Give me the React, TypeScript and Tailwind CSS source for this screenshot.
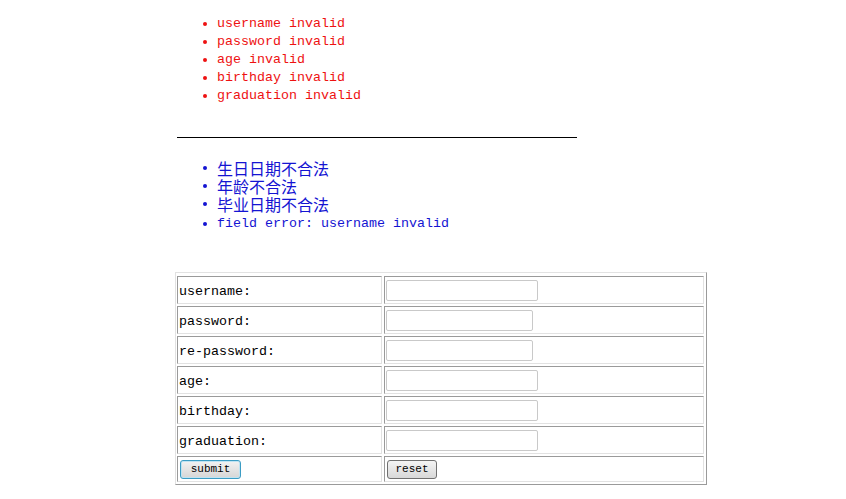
const mono = "font-['Liberation_Mono','Courier_New',monospace]";
const cjk = "inline-block align-top text-[16px] leading-[18px] font-['Noto_Sans_CJK_SC',sans-serif]";

const errors = ["username invalid", "password invalid", "age invalid", "birthday invalid", "graduation invalid"];

const fields = [
  { label: "username:", w: "w-[152px]", type: "text" },
  { label: "password:", w: "w-[147px]", type: "password" },
  { label: "re-password:", w: "w-[147px]", type: "password" },
  { label: "age:", w: "w-[152px]", type: "text" },
  { label: "birthday:", w: "w-[152px]", type: "text" },
  { label: "graduation:", w: "w-[152px]", type: "text" },
];

const cell = "border border-t-[#9a9a9a] border-l-[#9a9a9a] border-r-[#e2e2e2] border-b-[#e2e2e2] flex items-center";

export default function App() {
  return (
    <div className={`min-h-screen bg-white pl-[175px] ${mono} text-[13.33px] leading-[18px]`}>
      <ul className="list-disc pl-[42px] pt-[15px] text-[#ee1111]">
        {errors.map((e) => (
          <li key={e}>{e}</li>
        ))}
      </ul>

      <div className="ml-[2px] mt-[32px] h-px w-[400px] bg-black" />

      <ul className="list-disc pl-[42px] pt-[21px] text-[#1414d2]">
        <li className="h-[18px]"><span className={cjk}>生日日期不合法</span></li>
        <li className="h-[18px]"><span className={cjk}>年龄不合法</span></li>
        <li className="h-[18px]"><span className={cjk}>毕业日期不合法</span></li>
        <li className="pt-[2px]">field error: username invalid</li>
      </ul>

      <form className="mt-[39px] inline-grid grid-cols-[205px_320px] gap-[2px] border border-t-[#e2e2e2] border-l-[#e2e2e2] border-r-[#9a9a9a] border-b-[#9a9a9a] pt-[3px] pl-[1px] pr-[2px] pb-[2px] text-black">
        {fields.map((f) => (
          <div key={f.label} className="contents">
            <div className={`${cell} h-[28px] pl-[1px] pt-[3px]`}>{f.label}</div>
            <div className={`${cell} h-[28px] pl-[1px]`}>
              <input
                type={f.type}
                className={`${f.w} h-[21px] rounded-[2px] border border-[#c9c9c9] bg-white outline-none`}
              />
            </div>
          </div>
        ))}
        <div className={`${cell} h-[26px] pl-[2px]`}>
          <button
            type="button"
            className="h-[19px] w-[61px] rounded-[3px] border border-[#3b9cc4] bg-gradient-to-b from-[#f2f2f2] to-[#d6d6d6] text-[11px] leading-none shadow-[inset_0_0_0_1px_#bfe3f2]"
          >
            submit
          </button>
        </div>
        <div className={`${cell} h-[26px] pl-[2px]`}>
          <button
            type="reset"
            className="h-[19px] w-[50px] rounded-[3px] border border-[#707070] bg-gradient-to-b from-[#f4f4f4] to-[#d8d8d8] text-[11px] leading-none"
          >
            reset
          </button>
        </div>
      </form>
    </div>
  );
}
